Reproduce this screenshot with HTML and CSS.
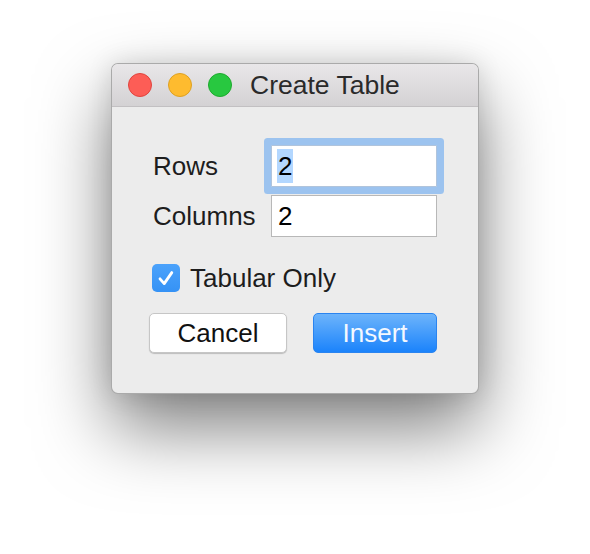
FILE: index.html
```html
<!DOCTYPE html>
<html lang="en">
<head>
<meta charset="utf-8">
<title>Create Table</title>
<link rel="stylesheet" href="styles.css">
</head>
<body>
<div class="window">
  <div class="titlebar">
    <span class="light red"></span>
    <span class="light yellow"></span>
    <span class="light green"></span>
    <span class="title">Create Table</span>
  </div>
  <div class="content">
    <div class="form">
      <label class="label">Rows</label>
      <div class="field focused"><span class="sel">2</span></div>
      <label class="label">Columns</label>
      <div class="field">2</div>
    </div>
    <div class="check-row">
      <span class="checkbox">
        <svg width="28" height="28" viewBox="0 0 28 28"><path d="M8 14.8 L12.2 19.6 L19.8 8.6" fill="none" stroke="#fff" stroke-width="2.8" stroke-linecap="round" stroke-linejoin="round"/></svg>
      </span>
      <span class="check-label">Tabular Only</span>
    </div>
    <div class="buttons">
      <button class="btn cancel">Cancel</button>
      <button class="btn insert">Insert</button>
    </div>
  </div>
</div>
</body>
</html>
```
FILE: styles.css
```css
html {
  height: 100%;
  background: #ffffff;
}
body {
  box-sizing: border-box;
  margin: 0;
  min-height: 100%;
  height: 554px;
  padding: 63px 0 0 111px;
  font-family: "Liberation Sans", Arial, sans-serif;
  font-size: 26px;
  color: #1d1d1d;
  background: #ffffff;
}
.window {
  box-sizing: border-box;
  width: 368px;
  height: 331px;
  background: #ececec;
  border: 1px solid rgba(0, 0, 0, 0.28);
  border-radius: 7px;
  box-shadow: 0 34px 72px rgba(0, 0, 0, 0.5), 0 0 26px rgba(0, 0, 0, 0.12);
  overflow: hidden;
}
.titlebar {
  height: 42px;
  display: flex;
  align-items: center;
  padding-left: 16px;
  background: linear-gradient(#e9e7e9, #d4d2d4);
  border-bottom: 1px solid #c2c0c2;
}
.light {
  box-sizing: border-box;
  width: 24px;
  height: 24px;
  border-radius: 50%;
  margin-right: 16px;
}
.red { background: #fd5d56; border: 1px solid #e0443e; }
.yellow { background: #febb2f; border: 1px solid #dea122; }
.green { background: #28c840; border: 1px solid #1eaa2e; }
.title {
  margin-left: 2px;
  color: #2a2a2a;
  font-size: 26.5px;
}
.content {
  padding: 38px 41px 40px 37px;
}
.form {
  display: grid;
  grid-template-columns: 118px 166px;
  row-gap: 8px;
  padding-left: 4px;
  align-items: center;
}
.label {
  color: #1d1d1d;
  line-height: 30px;
}
.field {
  box-sizing: border-box;
  height: 42px;
  background: #fff;
  border: 1px solid #b8b8b8;
  padding-left: 6px;
  line-height: 40px;
  color: #000;
}
.field.focused {
  border: 1px solid #b0c4dc;
  box-shadow: 0 0 0 7px #9cc3ef;
  border-radius: 1px;
}
.sel {
  background: #b3d7ff;
  display: inline-block;
  line-height: 34px;
  padding: 0 1px;
  margin-left: -1px;
}
.check-row {
  display: flex;
  align-items: center;
  height: 28px;
  margin-top: 27px;
  padding-left: 3px;
}
.checkbox {
  width: 28px;
  height: 28px;
  border-radius: 5px;
  background: linear-gradient(#4ba2fb, #3592f5);
  display: block;
}
.checkbox svg { display: block; }
.check-label {
  margin-left: 10px;
  line-height: 28px;
}
.buttons {
  display: flex;
  justify-content: space-between;
  margin-top: 21px;
}
.btn {
  font-family: "Liberation Sans", Arial, sans-serif;
  font-size: 26px;
  height: 40px;
  border-radius: 5px;
  padding: 0;
  line-height: 38px;
}
.cancel {
  width: 138px;
  background: #fff;
  color: #111;
  border: 1px solid #c6c6c6;
  box-shadow: 0 1px 1px rgba(0, 0, 0, 0.2);
}
.insert {
  width: 124px;
  color: #f4f8ff;
  border: 1px solid #2a84f0;
  background: linear-gradient(#6db4fb, #1b83fb);
}
```
